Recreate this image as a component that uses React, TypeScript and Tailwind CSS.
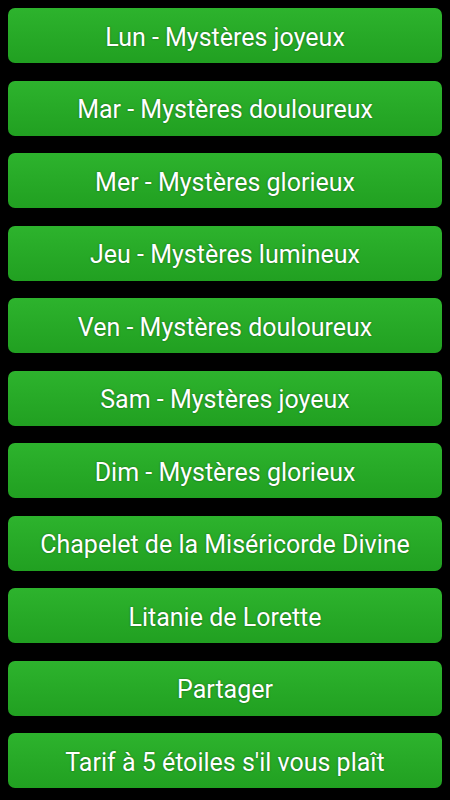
const items = [
  "Lun - Mystères joyeux",
  "Mar - Mystères douloureux",
  "Mer - Mystères glorieux",
  "Jeu - Mystères lumineux",
  "Ven - Mystères douloureux",
  "Sam - Mystères joyeux",
  "Dim - Mystères glorieux",
  "Chapelet de la Miséricorde Divine",
  "Litanie de Lorette",
  "Partager",
  "Tarif à 5 étoiles s'il vous plaît",
];

export default function App() {
  return (
    <div className="min-h-[800px] w-[450px] bg-black px-[8px] pt-[8px] font-['Roboto',sans-serif]">
      <div className="flex flex-col gap-[17.5px]">
        {items.map((label) => (
          <button
            key={label}
            className="flex h-[55px] w-full items-center justify-center rounded-[7px] bg-gradient-to-b from-[#2db32d] to-[#21a021] pt-[3px] text-[25px] leading-none text-white [text-shadow:0_0_2px_rgba(0,0,0,0.45)]"
          >
            {label}
          </button>
        ))}
      </div>
    </div>
  );
}
